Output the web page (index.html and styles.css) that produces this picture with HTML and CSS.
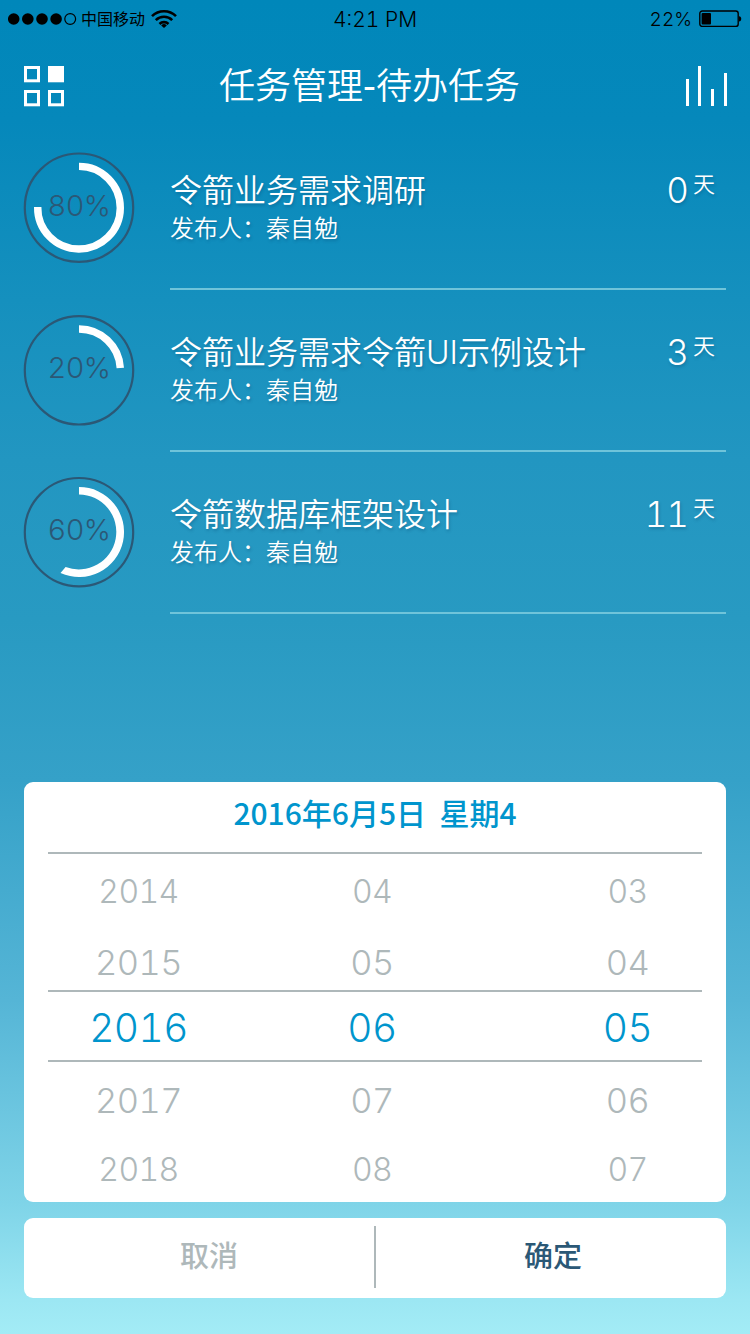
FILE: index.html
```html
<!DOCTYPE html>
<html lang="zh-CN">
<head>
    <meta charset="UTF-8">
    <meta name="viewport" content="width=device-width, initial-scale=1.0">
    <title>任务管理-待办任务</title>
    <link rel="stylesheet" href="styles.css">
</head>
<body>

    <!-- Status bar -->
    <div class="status">
        <div class="carrier">
            <svg width="70" height="14" viewBox="0 0 70 14">
                <circle cx="5.7" cy="7" r="5.8"/>
                <circle cx="19.8" cy="7" r="5.8"/>
                <circle cx="34" cy="7" r="5.8"/>
                <circle cx="48.1" cy="7" r="5.8"/>
                <circle cx="62.2" cy="7" r="5.4" fill="none" stroke="#000" stroke-width="1.2"/>
            </svg>
            <span>中国移动</span>
            <svg class="wifi" width="26" height="20" viewBox="0 0 26 20" fill="none" stroke="#000" stroke-width="2.6">
                <path d="M1 7.2a17 17 0 0 1 24 0"/>
                <path d="M4.8 11.2a11.6 11.6 0 0 1 16.4 0"/>
                <path d="M8.5 15a6.4 6.4 0 0 1 9 0"/>
                <path d="M13 19l-2.8-2.6a4 4 0 0 1 5.6 0z" fill="#000" stroke="none"/>
            </svg>
        </div>
        <div class="time">4:21 PM</div>
        <div class="battery">
            <span>22%</span>
            <svg width="43" height="18" viewBox="0 0 43 18">
                <rect x="0.8" y="1" width="38.4" height="15.4" rx="2.5" fill="none" stroke="#000" stroke-width="1.4"/>
                <rect x="2.6" y="3" width="9.4" height="11.4" rx="1"/>
                <path d="M40 6.2c3 0 3 5.2 0 5.2z"/>
            </svg>
        </div>
    </div>

    <!-- Header -->
    <div class="header">
        <svg width="40" height="41" viewBox="0 0 40 41" fill="none" stroke="#fff" stroke-width="3">
            <rect x="1.5" y="1.5" width="13" height="13.3"/>
            <rect x="25.5" y="1.5" width="13" height="13.3" fill="#fff"/>
            <rect x="1.5" y="25.5" width="13" height="13.3"/>
            <rect x="25.5" y="25.5" width="13" height="13.3"/>
        </svg>
        <h1>任务管理<b>-</b>待办任务</h1>
        <svg width="41" height="40" viewBox="0 0 41 40" fill="#fff">
            <rect x="0" y="13" width="3" height="27"/>
            <rect x="12" y="0" width="3" height="40"/>
            <rect x="25" y="23" width="3" height="17"/>
            <rect x="38" y="7" width="3" height="33"/>
        </svg>
    </div>

    <!-- Task list -->
    <div class="tasks">
        <div class="task">
            <div class="ring">
                <svg width="112" height="112" viewBox="0 0 112 112" fill="none">
                    <circle cx="56" cy="55.7" r="54.2" stroke="#2b5876" stroke-width="2.2"/>
                    <path d="M56 14.4A41.3 41.3 0 1 1 14.7 55" stroke="#fff" stroke-width="7.4"/>
                </svg>
                <span>80%</span>
            </div>
            <div class="info">
                <div>
                    <div class="name">令箭业务需求调研</div>
                    <div class="owner">发布人：秦自勉</div>
                </div>
                <div class="days">0<span>天</span></div>
            </div>
        </div>
        <div class="task">
            <div class="ring">
                <svg width="112" height="112" viewBox="0 0 112 112" fill="none">
                    <circle cx="56" cy="56.3" r="54.2" stroke="#2b5876" stroke-width="2.2"/>
                    <path d="M56 15A41.3 41.3 0 0 1 97.3 54" stroke="#fff" stroke-width="7.4"/>
                </svg>
                <span>20%</span>
            </div>
            <div class="info">
                <div>
                    <div class="name">令箭业务需求令箭UI示例设计</div>
                    <div class="owner">发布人：秦自勉</div>
                </div>
                <div class="days">3<span>天</span></div>
            </div>
        </div>
        <div class="task">
            <div class="ring">
                <svg width="112" height="112" viewBox="0 0 112 112" fill="none">
                    <circle cx="56" cy="56.2" r="54.2" stroke="#2b5876" stroke-width="2.2"/>
                    <path d="M56 11A45 45 0 1 1 37.5 97L42.6 91A37.5 37.5 0 1 0 56 18.4z" fill="#fff"/>
                </svg>
                <span>60%</span>
            </div>
            <div class="info">
                <div>
                    <div class="name">令箭数据库框架设计</div>
                    <div class="owner">发布人：秦自勉</div>
                </div>
                <div class="days">11<span>天</span></div>
            </div>
        </div>
    </div>

    <!-- Date picker -->
    <div class="picker">
        <div class="date">2016年6月5日&nbsp; 星期4</div>
        <div class="row far">
            <span>2014</span><span>04</span><span>03</span>
        </div>
        <div class="row near before">
            <span>2015</span><span>05</span><span>04</span>
        </div>
        <div class="row selected">
            <span>2016</span><span>06</span><span>05</span>
        </div>
        <div class="row near">
            <span>2017</span><span>07</span><span>06</span>
        </div>
        <div class="row far last">
            <span>2018</span><span>08</span><span>07</span>
        </div>
    </div>

    <!-- Buttons -->
    <div class="actions">
        <button class="cancel">取消</button>
        <button class="ok">确定</button>
    </div>

</body>
</html>
```
FILE: styles.css
```css
* {
    box-sizing: border-box;
}
body {
    width: 750px;
    height: 1334px;
    margin: 0;
    font-family: Inter, "Noto Sans CJK SC", sans-serif;
    font-weight: 300;
    font-variant-numeric: tabular-nums;
    color: #fff;
    background: linear-gradient(#0087ba 0, #0588bb 120px, #1590be 300px, #2296c1 460px, #289ac2 620px, #35a1c8 780px, #55b5d6 1000px, #7fd4e8 1204px, #9ce7f3 1300px, #a3ecf6 1334px);
}

/* status bar */
.status {
    display: grid;
    grid-template-columns: 250px 250px 250px;
    align-items: center;
    height: 38px;
    color: #000;
}
.carrier {
    display: flex;
    align-items: center;
    padding-left: 8px;
    font-size: 16px;
    font-weight: 400;
}
.carrier span {
    margin: -3px 6px 0 3px;
}
.time {
    font-size: 21px;
    font-weight: 350;
    text-align: center;
}
.battery {
    display: flex;
    align-items: center;
    justify-content: flex-end;
    gap: 7px;
    padding-right: 8px;
    font-size: 19px;
    font-weight: 350;
}

/* header */
.header {
    display: flex;
    justify-content: space-between;
    height: 90px;
    padding: 28px 23px 0 24px;
}
h1 {
    margin: -1px 11px 0 0;
    font-family: "Noto Sans CJK SC", sans-serif;
    font-size: 36px;
    font-weight: 350;
    line-height: 36px;
}
h1 b {
    font-weight: 500;
}

/* tasks */
.task {
    display: flex;
    height: 162px;
    padding: 0 24px 0 23px;
}
.ring {
    display: grid;
    place-items: center;
    width: 112px;
    height: 112px;
    margin-top: 24px;
    margin-right: 35px;
    font-size: 29px;
    letter-spacing: -0.6px;
    color: #2b5876;
}
.ring svg, .ring span {
    grid-area: 1 / 1;
}
.ring span {
    margin-top: -5px;
}
.info {
    flex: 1;
    display: flex;
    justify-content: space-between;
    padding: 44px 11px 0 0;
    border-bottom: 2px solid #6fc4da;
    text-shadow: 1px 2px 3px rgba(0, 60, 100, 0.3);
}
.name {
    padding-top: 1px;
    font-size: 32px;
    font-weight: 350;
    line-height: 36px;
}
.owner {
    font-size: 24px;
    font-weight: 350;
    line-height: 40px;
}
.days {
    display: flex;
    font-size: 35px;
    letter-spacing: -1px;
    line-height: 36px;
}
.days span {
    margin-left: 5px;
    font-size: 22px;
    font-weight: 350;
    letter-spacing: 0;
    line-height: 24px;
}

/* date picker */
.picker {
    height: 420px;
    margin: 168px 24px 0;
    padding: 0 24px;
    background-color: #fff;
    border-radius: 9px;
    color: #aeb8ba;
}
.date {
    height: 72px;
    border-bottom: 2px solid #aeb8ba;
    font-family: "Noto Sans CJK SC", sans-serif;
    font-size: 30px;
    font-weight: 500;
    font-variant-numeric: normal;
    line-height: 60px;
    text-align: center;
    color: #0095cd;
}
.row {
    display: grid;
    grid-template-columns: 181px 286px 225px;
    align-items: center;
    letter-spacing: -0.6px;
    text-align: center;
}
.far {
    height: 75px;
    font-size: 32px;
}
.near {
    height: 78px;
    padding-bottom: 2px;
    font-size: 34.5px;
}
.before {
    height: 61px;
    padding-top: 7px;
}
.selected {
    height: 72px;
    border-top: 2px solid #aeb8ba;
    border-bottom: 2px solid #aeb8ba;
    padding-top: 2px;
    font-size: 39px;
    color: #0095cd;
}
.last {
    height: 59px;
}

/* buttons */
.actions {
    display: grid;
    grid-template-columns: 352px 350px;
    height: 80px;
    margin: 16px 24px 0;
    padding: 8px 0 10px;
    background-color: #fff;
    border-radius: 9px;
}
button {
    padding: 0 0 6px;
    border: none;
    background: none;
    font-family: "Noto Sans CJK SC", sans-serif;
    font-size: 29px;
    font-weight: 500;
    cursor: pointer;
}
.cancel {
    padding-left: 20px;
    border-right: 2px solid #aeb8ba;
    color: #aeb8ba;
}
.ok {
    padding-left: 4px;
    color: #2b5876;
}
```
